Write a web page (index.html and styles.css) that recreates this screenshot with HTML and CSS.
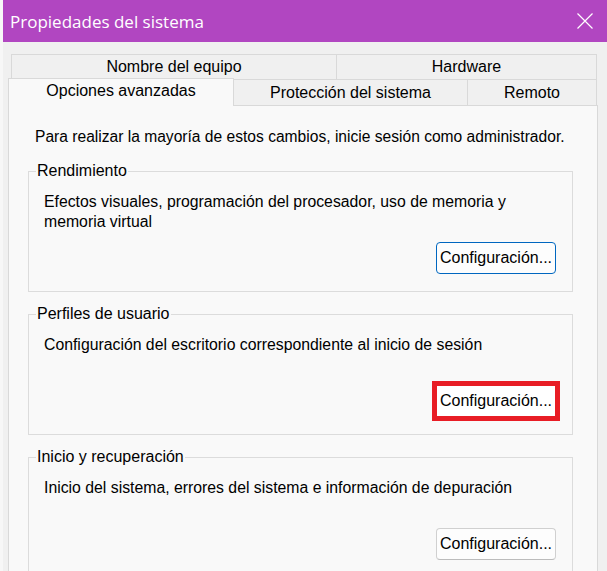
FILE: index.html
```html
<!DOCTYPE html>
<html lang="es">
<head>
<meta charset="utf-8">
<title>Propiedades del sistema</title>
<link rel="stylesheet" href="styles.css">
</head>
<body>
<div class="window">
  <div class="titlebar">
    <span class="title">Propiedades del sistema</span>
    <svg class="close" width="16" height="16" viewBox="0 0 16 16"><path d="M0.5 0.5 L15.5 15.5 M15.5 0.5 L0.5 15.5" stroke="#fff" stroke-width="1.2" fill="none"/></svg>
  </div>
  <div class="content">
    <div class="tabrow row1">
      <div class="tab t-nombre">Nombre del equipo</div>
      <div class="tab t-hardware">Hardware</div>
    </div>
    <div class="tabrow row2">
      <div class="tab t-opciones selected">Opciones avanzadas</div>
      <div class="tab t-proteccion">Protección del sistema</div>
      <div class="tab t-remoto">Remoto</div>
    </div>
    <div class="panel">
      <p class="intro">Para realizar la mayoría de estos cambios, inicie sesión como administrador.</p>
      <fieldset class="group">
        <legend>Rendimiento</legend>
        <p class="desc">Efectos visuales, programación del procesador, uso de memoria y memoria virtual</p>
        <div class="actions"><button class="btn focused">Configuración...</button></div>
      </fieldset>
      <fieldset class="group">
        <legend>Perfiles de usuario</legend>
        <p class="desc">Configuración del escritorio correspondiente al inicio de sesión</p>
        <div class="actions"><button class="btn highlighted">Configuración...</button></div>
      </fieldset>
      <fieldset class="group">
        <legend>Inicio y recuperación</legend>
        <p class="desc">Inicio del sistema, errores del sistema e información de depuración</p>
        <div class="actions"><button class="btn">Configuración...</button></div>
      </fieldset>
    </div>
  </div>
</div>
</body>
</html>
```
FILE: styles.css
```css
* { box-sizing: border-box; }
html, body {
  margin: 0;
  padding: 0;
  height: 100%;
  overflow: hidden;
}
body {
  background: #f7f7f7;
  font-family: "Liberation Sans", Arial, sans-serif;
  font-size: 16px;
  color: #000;
}
.window {
  margin-left: 3px;
  height: 100%;
  background: #f0f0f0;
}
.titlebar {
  height: 42px;
  background: #b146c1;
  display: flex;
  align-items: center;
  justify-content: space-between;
  padding: 0 14px 0 7px;
}
.title {
  color: #fff;
  font-size: 17px;
  font-family: "Open Sans", "Liberation Sans", sans-serif;
  font-weight: 400;
}
.close { display: block; }
.content {
  padding: 12px 9px 0 5px;
}
.tabrow {
  display: flex;
}
.row1 {
  padding-left: 3px;
}
.tab {
  border: 1px solid #d9d9d9;
  background: #f0f0f0;
  text-align: center;
  font-size: 16px;
  line-height: 24px;
  height: 25px;
}
.row1 .tab { border-bottom: none; }
.t-nombre { width: 325px; border-right: none; }
.t-hardware { width: 261px; }
.row2 { align-items: flex-end; }
.row2 .tab { height: 26px; line-height: 25px; }
.row2 .t-opciones {
  width: 226px;
  height: 28px;
  margin-top: -2px;
  background: #f9f9f9;
  border-bottom: none;
  margin-bottom: -1px;
  position: relative;
  z-index: 1;
  line-height: 24px;
}
.t-proteccion { width: 233px; border-left: none; border-right: none; border-bottom: none; }
.t-remoto { width: 130px; border-bottom: none; }
.panel {
  background: #f9f9f9;
  border: 1px solid #d9d9d9;
  border-bottom: none;
  height: 480px;
  padding: 21px 24px 0 19px;
}
.intro {
  margin: 0 0 14px 7px;
  line-height: 20px;
  font-size: 15.6px;
  white-space: nowrap;
}
.group {
  margin: 0 0 12px 0;
  border: 1px solid #dcdcdc;
  padding: 11px 16px 17px 15px;
  height: 131px;
  display: flex;
  flex-direction: column;
}
.group legend {
  padding: 0 1px;
  margin-left: -8px;
  line-height: 20px;
}
.desc {
  margin: 0;
  line-height: 20px;
  font-size: 15.8px;
}
.actions {
  margin-top: auto;
  display: flex;
  justify-content: flex-end;
}
.btn {
  width: 120px;
  height: 32px;
  font-family: "Liberation Sans", Arial, sans-serif;
  font-size: 16px;
  color: #000;
  background: #fdfdfd;
  border: 1px solid #d0d0d0;
  border-bottom-color: #bcbcbc;
  border-radius: 4px;
  padding: 0;
}
.btn.focused {
  border: 1px solid #0067c0;
}
.btn.highlighted {
  background: #fff;
  border-radius: 0;
  outline: 5px solid #e81d25;
  outline-offset: -1px;
}
```
